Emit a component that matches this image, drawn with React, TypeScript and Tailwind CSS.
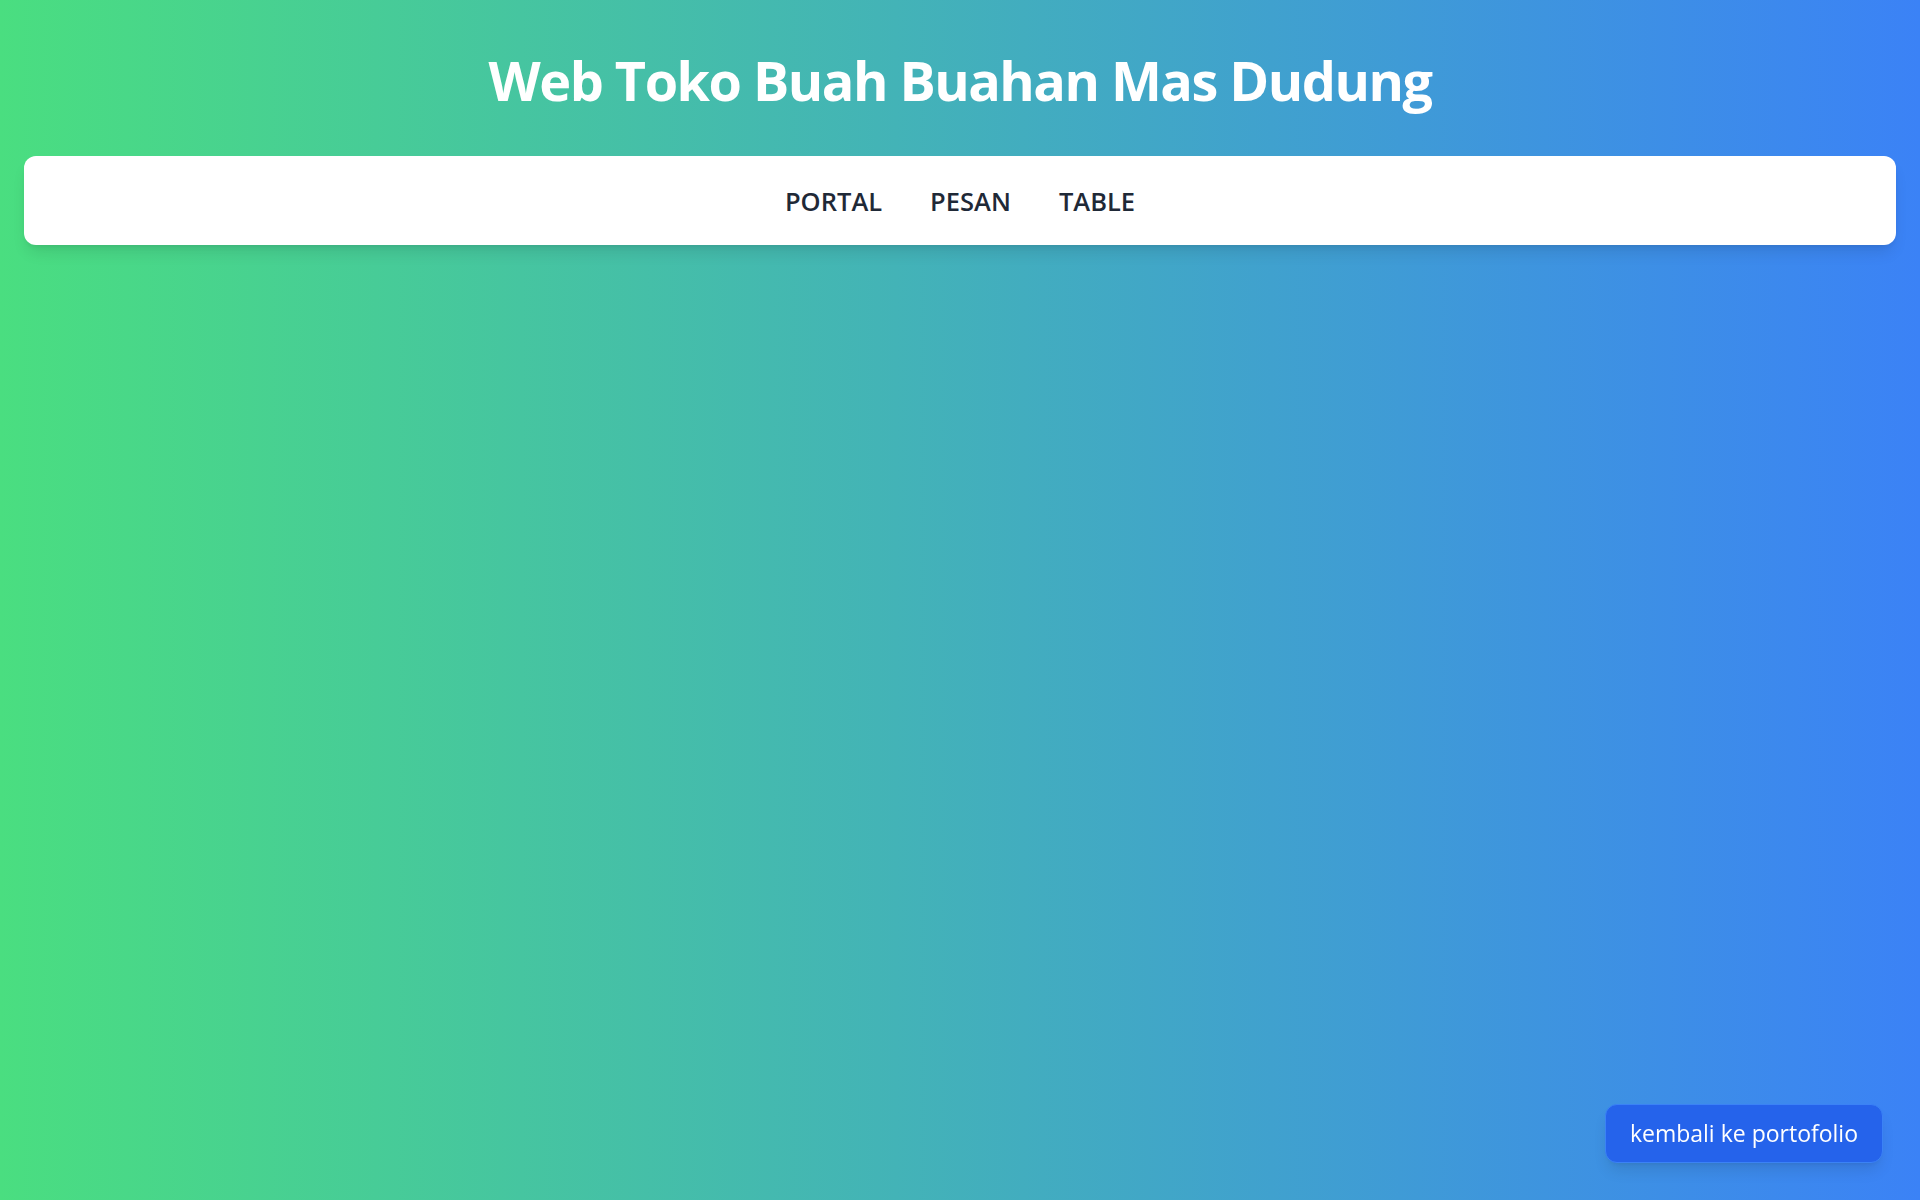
export default function App() {
  return (
    <div className="min-h-screen w-full bg-[linear-gradient(to_right,#4ade80,#3b82f6)] font-['Open_Sans',sans-serif]">
      <header className="pt-[53px] pb-[49px] text-center">
        <h1 className="text-[54px] leading-none font-bold text-white tracking-[-1.5px]">
          Web Toko Buah Buahan Mas Dudung
        </h1>
      </header>

      <nav className="mx-6 bg-white rounded-xl shadow-lg">
        <ul className="flex justify-center gap-12 pt-[29px] pb-[27px]">
          <li>
            <a href="#portal" className="text-[25.5px] leading-[33px] font-semibold text-[#1f2937] hover:text-blue-600">
              PORTAL
            </a>
          </li>
          <li>
            <a href="#pesan" className="text-[25.5px] leading-[33px] font-semibold text-[#1f2937] hover:text-blue-600">
              PESAN
            </a>
          </li>
          <li>
            <a href="#table" className="text-[25.5px] leading-[33px] font-semibold text-[#1f2937] hover:text-blue-600">
              TABLE
            </a>
          </li>
        </ul>
      </nav>

      <a
        href="#portfolio"
        className="fixed bottom-[37px] right-[37px] px-6 py-4 text-[23px] leading-[25px] text-white bg-[#2563eb] border border-[#3b82f6] rounded-xl shadow-lg"
      >
        kembali ke portofolio
      </a>
    </div>
  );
}
